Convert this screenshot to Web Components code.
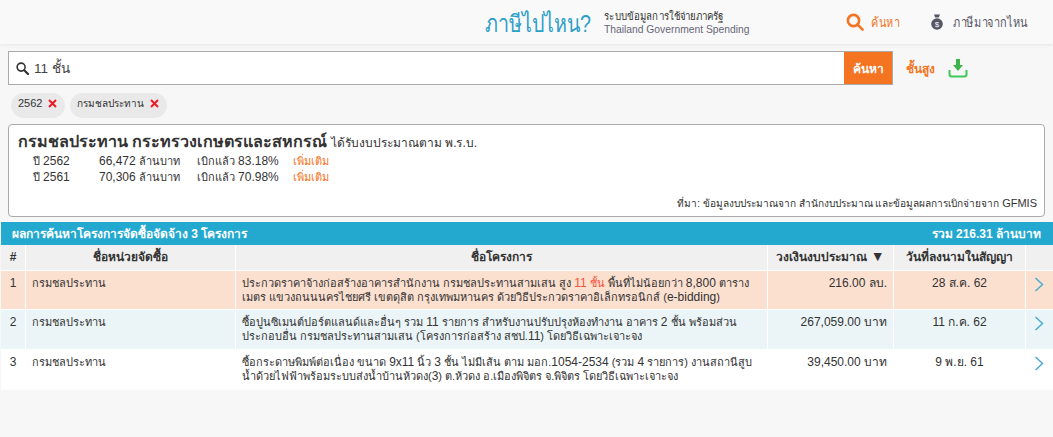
<!DOCTYPE html>
<html lang="th">
<head>
<meta charset="utf-8">
<title>ภาษีไปไหน?</title>
<style>
  html, body { margin: 0; padding: 0; background: #f7f7f7; }
  body { font: 12px "Liberation Sans", "Noto Sans", sans-serif; color: #333; width: 1053px; height: 437px; overflow: hidden; }
</style>
</head>
<body>
<tax-header></tax-header>
<tax-search value="11 ชั้น"></tax-search>
<tax-filters>
  <tax-chip>2562</tax-chip>
  <tax-chip style="font-size:10px">กรมชลประทาน</tax-chip>
</tax-filters>
<tax-budget></tax-budget>
<tax-results></tax-results>

<script>
const FONT = `"Liberation Sans", "Noto Sans", sans-serif`;

// Thai runs wide next to the latin digits, so digits get their own bigger span.
const latin = (s) => s.replace(/<[^>]+>|[0-9A-Za-z][0-9A-Za-z.,%-]*/g,
  (m) => m[0] == "<" ? m : `<span class="n">${m}</span>`);

customElements.define("tax-header", class extends HTMLElement {
  connectedCallback() {
    const shadow = this.attachShadow({ mode: "open" });
    shadow.innerHTML = `
      <style>
        :host {
          display: flex;
          align-items: center;
          height: 44px;
          padding-left: 485px;
          background: #f9f9f9;
          box-shadow: 0 1px 3px rgba(0,0,0,.08);
          font-family: ${FONT};
        }
        .squeeze { display: inline-block; transform-origin: left center; white-space: nowrap; }
        .logo { width: 119px; font-size: 24px; color: #2c9fc9; padding-top: 2px; }
        .logo .squeeze { transform: scaleX(.82); }
        .sub { width: 242px; font-size: 11px; line-height: 14px; color: #333; padding-top: 2px; }
        .sub .squeeze { transform: scaleX(.88); }
        .sub div + div { color: #667; font-size: 10.3px; }
        a { display: flex; align-items: center; font-size: 13px; white-space: nowrap; }
        a .squeeze { transform: scaleX(.84); }
        .find { color: #f47422; width: 85px; gap: 7px; }
        .from { color: #556; gap: 10px; }
      </style>
      <div class="logo"><span class="squeeze">ภาษีไปไหน?</span></div>
      <div class="sub"><div><span class="squeeze">ระบบข้อมูลการใช้จ่ายภาครัฐ</span></div><div>Thailand Government Spending</div></div>
      <a class="find">
        <svg width="18" height="18" viewBox="0 0 18 18" fill="none" stroke="#f47422" stroke-width="2.6"><circle cx="7.5" cy="7.5" r="5.6"/><path d="M11.6 11.6 L16.6 16.6" stroke-linecap="round"/></svg>
        <span class="squeeze">ค้นหา</span>
      </a>
      <a class="from">
        <svg width="12" height="17" viewBox="0 0 12 17" fill="#556"><path d="M3 .5h6L7.8 3.5H4.2z"/><circle cx="6" cy="10" r="5.8"/><text x="6" y="13" font-size="8" fill="#f9f9f9" text-anchor="middle" font-family="Liberation Sans">$</text></svg>
        <span class="squeeze">ภาษีมาจากไหน</span>
      </a>
    `;
  }
});

customElements.define("tax-search", class extends HTMLElement {
  connectedCallback() {
    const shadow = this.attachShadow({ mode: "open" });
    shadow.innerHTML = `
      <style>
        :host {
          display: flex;
          align-items: center;
          margin: 7px 0 0 8px;
          height: 34px;
          font-family: ${FONT};
        }
        .box {
          display: flex;
          align-items: center;
          gap: 5px;
          box-sizing: border-box;
          width: 836px;
          height: 34px;
          padding-left: 7px;
          background: #fff;
          border: 1px solid #aaa;
          border-right: 0;
          font-size: 13.5px;
          color: #444;
        }
        button {
          width: 49px;
          height: 34px;
          padding: 0;
          border: 1px solid #aaa;
          border-width: 1px 1px 1px 0;
          background: #f47422;
          color: #fff;
          font: bold 12px ${FONT};
        }
        .adv { margin-left: 13px; color: #f47422; font-size: 12px; font-weight: bold; }
        svg.dl { margin-left: 13px; }
      </style>
      <div class="box">
        <svg width="13" height="13" viewBox="0 0 14 14" fill="none" stroke="#333" stroke-width="1.7"><circle cx="5.5" cy="5.5" r="4.3"/><path d="M8.8 8.8 13 13" stroke-width="2.4" stroke-linecap="round"/></svg>
        <span>${this.getAttribute("value")}</span>
      </div>
      <button>ค้นหา</button>
      <span class="adv">ชั้นสูง</span>
      <svg class="dl" width="20" height="20" viewBox="0 0 20 20" fill="none"><path d="M8 1h4v6h3l-5 6-5-6h3z" fill="#3cb54a"/><path d="M1.5 12v4.5q0 2 2 2h13q2 0 2-2V12" stroke="#3cc95a" stroke-width="2"/></svg>
    `;
  }
});

customElements.define("tax-filters", class extends HTMLElement {
  connectedCallback() {
    const shadow = this.attachShadow({ mode: "open" });
    shadow.innerHTML = `
      <style>
        :host { display: flex; gap: 5px; margin: 8px 0 0 11px; height: 25px; }
      </style>
      <slot></slot>
    `;
  }
});

customElements.define("tax-chip", class extends HTMLElement {
  connectedCallback() {
    const shadow = this.attachShadow({ mode: "open" });
    shadow.innerHTML = `
      <style>
        :host {
          display: flex;
          align-items: center;
          gap: 6px;
          box-sizing: border-box;
          height: 25px;
          padding: 0 8px 5px 7px;
          background: #e9e9e9;
          border-radius: 13px;
          font: 11px ${FONT};
          color: #333;
        }
      </style>
      <slot></slot>
      <svg width="9" height="9" viewBox="0 0 9 9" stroke="#ee1c25" stroke-width="2"><path d="M1 1l7 7M8 1l-7 7"/></svg>
    `;
  }
});

customElements.define("tax-budget", class extends HTMLElement {
  connectedCallback() {
    const shadow = this.attachShadow({ mode: "open" });
    const years = [
      ["ปี 2562", "66,472 ล้านบาท", "เบิกแล้ว 83.18%"],
      ["ปี 2561", "70,306 ล้านบาท", "เบิกแล้ว 70.98%"],
    ];
    shadow.innerHTML = `
      <style>
        :host {
          display: block;
          box-sizing: border-box;
          position: relative;
          width: 1037px;
          height: 93px;
          margin: 6px 0 0 8px;
          padding: 6px 9px;
          background: #fff;
          border: 1px solid #aaa;
          border-radius: 4px;
          font: 11px ${FONT};
          color: #333;
        }
        .n { font-size: 1.09em; }
        h1 { height: 20px; margin: 0 0 2px; line-height: 20px; font-size: 12px; font-weight: normal; white-space: nowrap; }
        h1 b { font-size: 16.1px; }
        .year { display: grid; grid-template-columns: 66px 98px 96px auto; padding-left: 15px; line-height: 16px; }
        .more { color: #f47422; }
        .src { position: absolute; right: 7px; bottom: 5px; font-size: 10.1px; }
      </style>
      <h1><b>กรมชลประทาน กระทรวงเกษตรและสหกรณ์</b> ได้รับงบประมาณตาม พ.ร.บ.</h1>
      ${years.map(y => `<div class="year"><span>${latin(y[0])}</span><span>${latin(y[1])}</span><span>${latin(y[2])}</span><span class="more">เพิ่มเติม</span></div>`).join("")}
      <div class="src">${latin("ที่มา: ข้อมูลงบประมาณจาก สำนักงบประมาณ และข้อมูลผลการเบิกจ่ายจาก GFMIS")}</div>
    `;
  }
});

customElements.define("tax-results", class extends HTMLElement {
  connectedCallback() {
    const shadow = this.attachShadow({ mode: "open" });
    const rows = [
      ["1", "กรมชลประทาน", `ประกวดราคาจ้างก่อสร้างอาคารสำนักงาน กรมชลประทานสามเสน สูง <em>11 ชั้น</em> พื้นที่ไม่น้อยกว่า 8,800 ตาราง<br>เมตร แขวงถนนนครไชยศรี เขตดุสิต กรุงเทพมหานคร ด้วยวิธีประกวดราคาอิเล็กทรอนิกส์ (e-bidding)`, "216.00 ลบ.", "28 ส.ค. 62", "hit"],
      ["2", "กรมชลประทาน", `ซื้อปูนซิเมนต์ปอร์ตแลนด์และอื่นๆ รวม 11 รายการ สำหรับงานปรับปรุงห้องทำงาน อาคาร 2 ชั้น พร้อมส่วน<br>ประกอบอื่น กรมชลประทานสามเสน (โครงการก่อสร้าง สชป.11) โดยวิธีเฉพาะเจาะจง`, "267,059.00 บาท", "11 ก.ค. 62", "alt"],
      ["3", "กรมชลประทาน", `ซื้อกระดาษพิมพ์ต่อเนื่อง ขนาด 9x11 นิ้ว 3 ชั้น ไม่มีเส้น ตาม มอก.1054-2534 (รวม 4 รายการ) งานสถานีสูบ<br>น้ำด้วยไฟฟ้าพร้อมระบบส่งน้ำบ้านห้วดง(3) ต.ห้วดง อ.เมืองพิจิตร จ.พิจิตร โดยวิธีเฉพาะเจาะจง`, "39,450.00 บาท", "9 พ.ย. 61", ""],
    ];
    const chevron = `<svg width="10" height="15" viewBox="0 0 10 15" fill="none" stroke="#4aaed0" stroke-width="1.5"><path d="M1.5 1 8.5 7.5l-7 6.5"/></svg>`;
    shadow.innerHTML = `
      <style>
        :host {
          display: block;
          margin: 5px 0 0 1px;
          font: 12px ${FONT};
          color: #333;
        }
        .bar {
          display: flex;
          justify-content: space-between;
          align-items: center;
          height: 23px;
          padding: 0 12px 0 11px;
          background: #23a9cf;
          color: #fff;
          font-weight: bold;
        }
        .grid {
          display: grid;
          grid-template-columns: 24px 209px 531px 125px 131px 28px;
          grid-template-rows: 25px 38px 39px 40px;
          gap: 1px;
          background: #fff;
        }
        .grid > div { box-sizing: border-box; padding: 5px 6px; line-height: 14px; min-width: 0; }
        .grid > .th { background: #f0f0f0; font-weight: bold; text-align: center; padding-top: 5px; }
        .th i { font-style: normal; font-size: 14px; line-height: 12px; }
        .hit { background: #fbdfcf; }
        .alt { background: #ebf5f7; }
        .num { text-align: right; }
        .ctr { text-align: center; }
        .grid > .idx { padding-left: 0; padding-right: 0; text-align: center; }
        .name, .proj { font-size: 11px; white-space: nowrap; }
        .n { font-size: 1.09em; }
        .grid > .arr { padding: 6px 0 0 8px; }
        em { font-style: normal; color: #f1553a; }
      </style>
      <div class="bar"><span>ผลการค้นหาโครงการจัดซื้อจัดจ้าง 3 โครงการ</span><span>รวม 216.31 ล้านบาท</span></div>
      <div class="grid">
        <div class="th">#</div><div class="th">ชื่อหน่วยจัดซื้อ</div><div class="th">ชื่อโครงการ</div><div class="th">วงเงินงบประมาณ <i>▼</i></div><div class="th">วันที่ลงนามในสัญญา</div><div class="th"></div>
        ${rows.map(r => `
          <div class="idx ${r[5]}">${r[0]}</div>
          <div class="name ${r[5]}">${r[1]}</div>
          <div class="proj ${r[5]}">${latin(r[2])}</div>
          <div class="num ${r[5]}">${r[3]}</div>
          <div class="ctr ${r[5]}">${r[4]}</div>
          <div class="arr ${r[5]}">${chevron}</div>
        `).join("")}
      </div>
    `;
  }
});
</script>
</body>
</html>
